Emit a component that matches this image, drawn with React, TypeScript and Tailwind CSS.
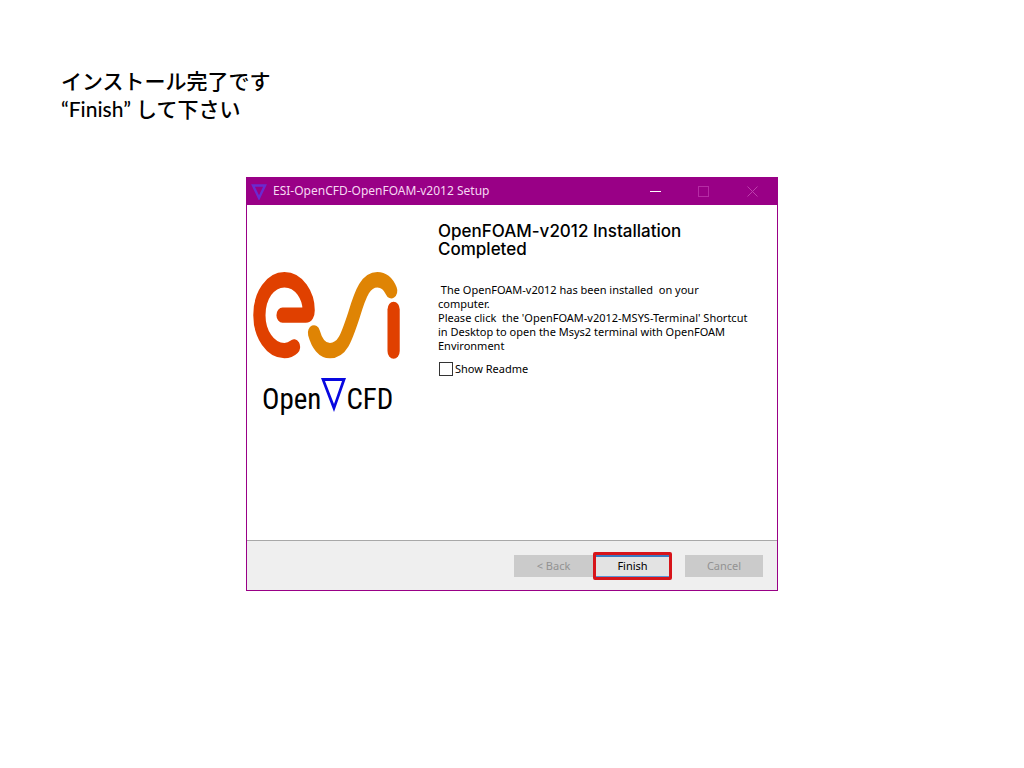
function EsiLogo() {
  return (
    <svg
      role="img"
      aria-label="ESI"
      className="h-[87px] w-[147px]"
      viewBox="30 36 552 260"
      preserveAspectRatio="none"
      fill="none"
      strokeWidth="46"
      strokeLinecap="round"
      strokeLinejoin="round"
    >
      <path
        stroke="#e04000"
        d="M184 260C172 269 162 271 148 271C95 271 54 222 54 165C54 106 95 59 148 59C204 59 239 108 239 150Q239 165 228 165H141"
      />
      <path
        stroke="#df8404"
        d="M259 218C270 250 290 271 319 271C365 271 380 235 409 165C435 95 455 59 497 59C525 59 540 75 549 92"
      />
      <path stroke="#e04000" d="M558 148V272" />
    </svg>
  );
}

function OpenCfdLogo() {
  return (
    <div className="mt-[19px] ml-[9px] flex items-start font-['Roboto_Condensed','Liberation_Sans',sans-serif] text-[29px] leading-[42px] text-black">
      <span>Open</span>
      <svg className="h-[36px] w-[25px] shrink-0" viewBox="0 0 25 36" aria-hidden="true">
        <path d="M0 0H25L13 34Z M4 3L13 26L21 3Z" fill="#0808e0" fillRule="evenodd" />
      </svg>
      <span>CFD</span>
    </div>
  );
}

function TitleBar() {
  return (
    <header className="flex h-[27px] items-center bg-[#990086] pl-1 text-[#f6d8f2]">
      <svg className="h-[16px] w-[16px]" viewBox="0 0 16 16" aria-hidden="true">
        <path d="M2 1.5H14L8 14Z" fill="none" stroke="#6a2bd0" strokeWidth="2.4" />
      </svg>
      <h1 className="ml-[6px] flex-1 pb-[2px] text-[12px] leading-4">ESI-OpenCFD-OpenFOAM-v2012 Setup</h1>
      <button type="button" aria-label="Minimize" className="flex w-12 justify-center">
        <svg className="h-[11px] w-[11px]" viewBox="0 0 11 11">
          <path d="M0 5.5H11" stroke="#fff" />
        </svg>
      </button>
      <button type="button" aria-label="Maximize" disabled className="flex w-12 justify-center">
        <svg className="h-[11px] w-[11px]" viewBox="0 0 11 11">
          <rect x=".5" y=".5" width="10" height="10" fill="none" stroke="#b52ca4" />
        </svg>
      </button>
      <button type="button" aria-label="Close" disabled className="flex w-[50px] justify-center">
        <svg className="h-[11px] w-[11px]" viewBox="0 0 11 11">
          <path d="M.5 .5L10.5 10.5M10.5 .5L.5 10.5" stroke="#bd3fac" />
        </svg>
      </button>
    </header>
  );
}

export default function App() {
  return (
    <main className="min-h-screen bg-white pt-[67px] font-['Noto_Sans',sans-serif] text-black">
      <p className="pl-[61px] font-['Lato','Noto_Sans_CJK_JP',sans-serif] text-[21px] leading-[28px] font-medium">
        インストール完了です
        <br />
        “Finish” して下さい
      </p>

      <section className="mx-auto mt-[54px] w-[532px] border border-[#990086] bg-white">
        <TitleBar />
        <div className="flex min-h-[335px]">
          <div className="w-[191px] pt-[67px] pl-[6px]">
            <EsiLogo />
            <OpenCfdLogo />
          </div>
          <div className="flex-1 pt-[17px]">
            <h2 className="font-['Inter',sans-serif] text-[17px] leading-[18px] font-medium">
              OpenFOAM-v2012 Installation
              <br />
              Completed
            </h2>
            <p className="mt-[25px] text-[11px] leading-[14px] whitespace-pre">
              {" The OpenFOAM-v2012 has been installed  on your\ncomputer.\nPlease click  the 'OpenFOAM-v2012-MSYS-Terminal' Shortcut\nin Desktop to open the Msys2 terminal with OpenFOAM\nEnvironment"}
            </p>
            <label className="mt-[9px] ml-px flex items-center gap-[2px] text-[11px] leading-[14px]">
              <input
                type="checkbox"
                className="h-[14px] w-[14px] appearance-none border border-[#333] bg-white checked:bg-[#333]"
              />
              Show Readme
            </label>
          </div>
        </div>
        <footer className="flex h-[50px] items-center justify-end border-t border-[#a8a8a8] bg-[#efefef] pt-px pr-[14px] text-[11px]">
          <button type="button" disabled className="h-[22px] w-[79px] bg-[#cbcbcb] text-[#929292]">
            &lt; Back
          </button>
          <button
            type="button"
            className="h-[28px] w-[79px] rounded-[2px] border-3 border-[#d7141a] bg-[#e3e3e3] shadow-[inset_0_2px_0_#3978c0,inset_0_-1px_0_#5a94d6]"
          >
            Finish
          </button>
          <button type="button" disabled className="ml-[13px] h-[22px] w-[78px] bg-[#cbcbcb] text-[#929292]">
            Cancel
          </button>
        </footer>
      </section>
    </main>
  );
}
